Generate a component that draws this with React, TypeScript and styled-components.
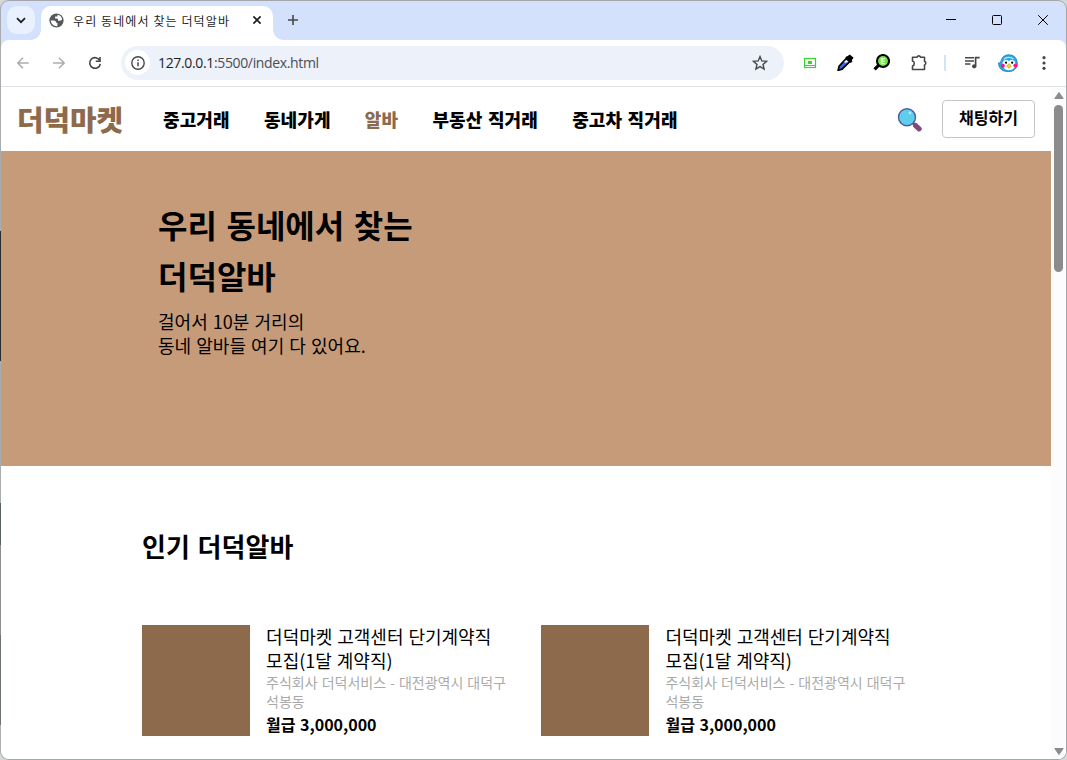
import React from 'react';
import styled, { createGlobalStyle } from 'styled-components';

const KR = `'Noto Sans CJK KR', 'Noto Sans', sans-serif`;

const GlobalStyle = createGlobalStyle`
  * { box-sizing: border-box; }
  body { margin: 0; background: #d5d7d9; font-family: ${KR}; color: #000; }
  h1, h2, h3, p { margin: 0; }
`;

const Desktop = styled.div`
  width: 1067px;
  height: 760px;
  padding: 1px;
  border-radius: 9px;
  overflow: hidden;
  background:
    linear-gradient(#a9abae 231px, #2b2c30 231px 361px, #a9abae 361px 503px, #56635a 503px 545px, #8d8f92 545px 635px, #6c7172 635px 725px, #b0b0b0 725px) 0 0 / 1px 100% no-repeat,
    #a4a6a9;
`;

const Window = styled.div`
  display: flex;
  flex-direction: column;
  width: 1065px;
  height: 758px;
  border-radius: 8px;
  overflow: hidden;
  background: #d3e1fd;
`;

const TabStrip = styled.div`
  display: flex;
  align-items: flex-start;
  height: 39px;
  padding: 5px 0 0 6px;
`;

const TabSearch = styled.div`
  display: grid;
  place-items: center;
  width: 28px;
  height: 28px;
  border-radius: 10px;
  background: #e9f0fe;
`;

const Tab = styled.div`
  position: relative;
  display: flex;
  align-items: center;
  width: 232px;
  height: 34px;
  margin-left: 6px;
  padding: 0 11px 6px 8px;
  border-radius: 10px 10px 0 0;
  background: #fff;
  &::before, &::after {
    content: '';
    position: absolute;
    bottom: 0;
    width: 10px;
    height: 10px;
  }
  &::before { left: -10px; background: radial-gradient(circle at 0 0, transparent 9.5px, #fff 10px); }
  &::after { right: -10px; background: radial-gradient(circle at 100% 0, transparent 9.5px, #fff 10px); }
`;

const TabTitle = styled.span`
  flex: 1;
  margin-left: 9px;
  padding-top: 1px;
  font-size: 12px;
  line-height: 18px;
  letter-spacing: 1.1px;
  white-space: nowrap;
  color: #1f1f1f;
`;

const NewTab = styled.div`
  margin: 8px 0 0 14px;
  line-height: 0;
`;

const WindowControls = styled.div`
  display: flex;
  gap: 35px;
  margin: 9px 17px 0 auto;
`;

const Toolbar = styled.div`
  display: flex;
  align-items: center;
  flex: none;
  height: 47px;
  padding: 0 15px 1px 14px;
  border-bottom: 1px solid #dfe1e4;
  border-radius: 8px 8px 0 0;
  background: #fff;
  svg { flex: none; display: block; }
`;

const NavButtons = styled.div`
  display: flex;
  gap: 20px;
  width: 106px;
`;

const AddressBar = styled.div`
  display: flex;
  align-items: center;
  width: 663px;
  height: 34px;
  padding: 0 16px 0 4px;
  border-radius: 17px;
  background: #ecf1fa;
`;

const SiteInfo = styled.div`
  display: grid;
  place-items: center;
  width: 25px;
  height: 25px;
  border-radius: 50%;
  background: #fff;
`;

const Url = styled.span`
  flex: 1;
  margin-left: 8px;
  font: 14px/20px 'Open Sans', sans-serif;
  letter-spacing: -0.35px;
  color: #4a4e54;
  b { font-weight: 400; color: #1f1f1f; }
`;

const Extensions = styled.div`
  display: flex;
  align-items: center;
  justify-content: space-between;
  width: 125px;
  margin-left: 19px;
`;

const ToolbarDivider = styled.div`
  width: 2px;
  height: 16px;
  margin: 0 18px 0 16px;
  background: #d3e3fd;
`;

const ToolbarEnd = styled.div`
  display: flex;
  align-items: center;
  gap: 17px;
  svg:last-child { margin-left: 6px; }
`;

const Viewport = styled.div`
  display: flex;
  flex: 1;
  min-height: 0;
  background: #fff;
`;

const Page = styled.main`
  flex: 1;
  min-width: 0;
  overflow: hidden;
`;

const Scrollbar = styled.div`
  display: flex;
  flex-direction: column;
  align-items: center;
  justify-content: space-between;
  width: 15px;
  padding: 5px 0 4px;
  background: #fcfcfc;
  svg { display: block; }
`;

const Thumb = styled.div`
  width: 9px;
  height: 167px;
  margin: 6px 0 auto;
  border-radius: 5px;
  background: #8b8b8b;
`;

const Header = styled.header`
  display: flex;
  align-items: center;
  height: 64px;
  padding: 0 16px;
`;

const Logo = styled.div`
  width: 146px;
  font-size: 28.8px;
  line-height: 40px;
  font-weight: 900;
  color: #8e6a4c;
`;

const Menu = styled.nav`
  display: flex;
  gap: 34.2px;
  flex: 1;
`;

const MenuItem = styled.a<{ $active?: boolean }>`
  font-size: 18px;
  line-height: 26px;
  font-weight: 900;
  letter-spacing: 0.12px;
  word-spacing: 1.2px;
  white-space: nowrap;
  color: ${p => (p.$active ? '#8e6a4c' : '#000')};
`;

const SearchIcon = styled.svg`
  margin-top: 2px;
`;

const ChatButton = styled.button`
  width: 93px;
  height: 38px;
  margin-left: 19px;
  padding: 0 0 5px;
  border: 1px solid #c5c5c8;
  border-radius: 4px;
  background: #fff;
  font: 700 16px ${KR};
  color: #000;
`;

const Hero = styled.section`
  height: 315px;
  padding: 48px 157px 0;
  background: #c69b79;
`;

const HeroTitle = styled.h1`
  font-size: 32px;
  line-height: 51px;
  font-weight: 700;
  word-spacing: 2.3px;
`;

const HeroText = styled.p`
  margin-top: 8px;
  font-size: 18px;
  line-height: 24px;
  letter-spacing: 0.03px;
  word-spacing: 1px;
`;

const Popular = styled.section`
  padding: 61px 141px 0;
`;

const SectionTitle = styled.h2`
  font-size: 26px;
  line-height: 38px;
  font-weight: 700;
  letter-spacing: 0.1px;
  word-spacing: 1.4px;
`;

const JobGrid = styled.div`
  display: grid;
  grid-template-columns: 364px 364px;
  gap: 35.4px;
  margin-top: 60px;
`;

const Job = styled.article`
  display: flex;
  gap: 16.1px;
`;

const Thumbnail = styled.div`
  flex: none;
  width: 108px;
  height: 111px;
  background: #8e6a4c;
`;

const JobInfo = styled.div`
  margin-top: -1px;
  white-space: nowrap;
  word-spacing: 0.055em;
`;

const JobTitle = styled.h3`
  font-size: 18px;
  line-height: 24px;
  font-weight: 400;
`;

const JobPlace = styled.p`
  margin-top: 1px;
  font-size: 14px;
  line-height: 19px;
  color: #aaa;
`;

const JobPay = styled.p`
  margin-top: 1px;
  font-size: 16px;
  line-height: 24px;
  font-weight: 700;
`;

const menu = ['중고거래', '동네가게', '알바', '부동산 직거래', '중고차 직거래'];

function Browser() {
  return (
    <>
      <TabStrip>
        <TabSearch>
          <svg width="10" height="7" viewBox="0 0 10 7"><path d="M1 1.2 5 5.2 9 1.2" fill="none" stroke="#1f1f1f" strokeWidth="1.8" /></svg>
        </TabSearch>
        <Tab>
          <svg width="15" height="15" viewBox="0 0 15 15">
            <circle cx="7.5" cy="7.5" r="7.1" fill="#55595e" />
            <path d="M1.8 7.5h2.7c1.8 0 2.6.8 2.6 2.2h1.3v3.6a5.9 5.9 0 0 1-6.6-5.8zM8.5 1.7v1.8H6.1v2.1H8c1.1 0 1.1 1.2 1.1 2.1h2.1l2-1.2a5.8 5.8 0 0 0-4.7-4.8z" fill="#fff" />
          </svg>
          <TabTitle>우리 동네에서 찾는 더덕알바</TabTitle>
          <svg width="10" height="10" viewBox="0 0 10 10"><path d="m1.4 1.4 7.2 7.2m0-7.2L1.4 8.6" stroke="#202124" strokeWidth="1.7" /></svg>
        </Tab>
        <NewTab>
          <svg width="12" height="12" viewBox="0 0 12 12"><path d="M6 1v10M1 6h10" stroke="#474747" strokeWidth="1.6" /></svg>
        </NewTab>
        <WindowControls>
          <svg width="11" height="11" viewBox="0 0 11 11"><path d="M0 4.5h10" stroke="#000" /></svg>
          <svg width="11" height="11" viewBox="0 0 11 11"><rect x=".5" y=".5" width="9" height="9" rx="1" fill="none" stroke="#000" /></svg>
          <svg width="11" height="11" viewBox="0 0 11 11"><path d="m.2.2 9.6 9.6m0-9.6L.2 9.8" stroke="#000" /></svg>
        </WindowControls>
      </TabStrip>
      <Toolbar>
        <NavButtons>
          <svg width="16" height="16" viewBox="0 0 16 16"><path d="M13.8 8H3M8 2.8 2.8 8 8 13.2" fill="none" stroke="#acadae" strokeWidth="1.5" /></svg>
          <svg width="16" height="16" viewBox="0 0 16 16"><path d="M2 8h11M8 2.8 13.2 8 8 13.2" fill="none" stroke="#acadae" strokeWidth="1.5" /></svg>
          <svg width="16" height="16" viewBox="0 0 16 16">
            <path d="M12.7 5.4A5.3 5.3 0 1 0 13.3 8.8" fill="none" stroke="#434343" strokeWidth="1.6" />
            <path d="M13 2v4.2H8.8" fill="none" stroke="#434343" strokeWidth="1.6" />
          </svg>
        </NavButtons>
        <AddressBar>
          <SiteInfo>
            <svg width="14" height="14" viewBox="0 0 14 14">
              <circle cx="7" cy="7" r="6.2" fill="none" stroke="#43474c" strokeWidth="1.4" />
              <path d="M7 6.2v4M7 3.6v1.5" stroke="#43474c" strokeWidth="1.5" />
            </svg>
          </SiteInfo>
          <Url><b>127.0.0.1</b>:5500/index.html</Url>
          <svg width="16" height="16" viewBox="0 0 16 16"><path d="m8 1.6 1.8 4.3 4.8.4-3.6 3.1 1.1 4.7L8 11.6l-4.1 2.5L5 9.4 1.4 6.3l4.8-.4z" fill="none" stroke="#44474a" strokeWidth="1.4" /></svg>
        </AddressBar>
        <Extensions>
          <svg width="14" height="12" viewBox="0 0 14 12">
            <rect x="1.5" y="1.5" width="11" height="9" fill="none" stroke="#35d52a" strokeWidth="1.2" />
            <path d="M2 8.5h10" stroke="#35d52a" /><path d="M5 4h4v3H5z" fill="#35d52a" />
          </svg>
          <svg width="17" height="17" viewBox="0 0 16 16">
            <path d="M9.8 2 12 .4l3.6 3.2-1.7 2.2.6 1.3-1.6 1.3-5-4.9 1.1-1.4z" fill="#000" />
            <path d="m8.7 4.3 3.2 3-7.2 7-3.6 1 .9-3.9z" fill="#4067dd" stroke="#000" strokeWidth="1.6" />
            <path d="m8.8 5.3 2 2-2.6 1.2-1.8-1z" fill="#dbe6ff" />
          </svg>
          <svg width="17" height="17" viewBox="0 0 17 17">
            <path d="m6.3 10.7-4.7 4.6" stroke="#000" strokeWidth="3.2" />
            <circle cx="10" cy="7" r="6" fill="#6ee443" stroke="#000" strokeWidth="2.1" />
            <path d="M7.8 4h4.4v1.3H9.5v1.2h2.2v1.2H9.5v1.3h2.7v1.2H7.8z" fill="#e0ffd3" />
          </svg>
          <svg width="18" height="18" viewBox="0 0 18 18">
            <path d="M2.5 3.2H7a1.9 1.9 0 0 1 3.6 0h3.9v4.1a1.9 1.9 0 0 1 0 3.6v4.6h-12v-3.6a2.5 2.5 0 0 0 0-4.8z" fill="none" stroke="#474747" strokeWidth="1.6" strokeLinejoin="round" />
          </svg>
        </Extensions>
        <ToolbarDivider />
        <ToolbarEnd>
          <svg width="17" height="16" viewBox="0 0 17 16">
            <path d="M1 2.7h9M1 5.9h9M1 9.1h5.5" stroke="#474747" strokeWidth="1.5" />
            <circle cx="10.2" cy="11.3" r="2.1" fill="#474747" /><path d="M11.6 11.5V2.7h4" fill="none" stroke="#474747" strokeWidth="1.7" />
          </svg>
          <svg width="21" height="20" viewBox="0 0 21 20">
            <path d="M2.5 10.2.6 9.8C.3 14.5 3.4 18.6 10 18.6c6.2 0 9.3-3.4 9.3-8.1 0-5.3-3.5-8.7-8.6-8.7-4.7 0-7.6 3.3-8.2 8.4z" fill="#27a9ea" stroke="#1c78b6" strokeWidth=".8" />
            <path d="M6 6.4c1.8-2.3 6.3-3.2 9.3-.4" fill="none" stroke="#c8eeff" strokeWidth="1.2" />
            <path d="M4.5 10.6c.2-3.5 3.5-4.8 6.4-2.5 3-2.2 6.5-.7 6.5 2.7 0 4.1-2.4 6.4-6.5 6.4s-6.6-2.6-6.4-6.6z" fill="#fff" />
            <circle cx="8" cy="9.7" r="1.1" /><circle cx="14.2" cy="9.7" r="1.1" />
            <circle cx="4.8" cy="12.8" r="2.1" fill="#fa1784" /><circle cx="17.4" cy="12.6" r="2" fill="#fa1784" />
            <path d="m11 10.7 2.3 2.2L11 15.4l-2.3-2.5z" fill="#f4da21" stroke="#a58d1b" strokeWidth=".6" />
          </svg>
          <svg width="4" height="16" viewBox="0 0 4 16" fill="#474747"><circle cx="2" cy="2.7" r="1.6" /><circle cx="2" cy="8" r="1.6" /><circle cx="2" cy="13.3" r="1.6" /></svg>
        </ToolbarEnd>
      </Toolbar>
    </>
  );
}

function JobCard() {
  return (
    <Job>
      <Thumbnail />
      <JobInfo>
        <JobTitle>더덕마켓 고객센터 단기계약직<br />모집(1달 계약직)</JobTitle>
        <JobPlace>주식회사 더덕서비스 - 대전광역시 대덕구<br />석봉동</JobPlace>
        <JobPay>월급 3,000,000</JobPay>
      </JobInfo>
    </Job>
  );
}

export default function App() {
  return (
    <>
      <GlobalStyle />
      <Desktop>
        <Window>
          <Browser />
          <Viewport>
            <Page>
              <Header>
                <Logo>더덕마켓</Logo>
                <Menu>{menu.map(m => <MenuItem key={m} $active={m === '알바'}>{m}</MenuItem>)}</Menu>
                <SearchIcon width="26" height="26" viewBox="0 0 26 26">
                  <path d="m16 16 3 3" stroke="#6c4d86" strokeWidth="2.5" />
                  <path d="m18.6 18.6 3.5 3.2" stroke="#85477f" strokeWidth="5.2" strokeLinecap="round" />
                  <circle cx="10" cy="10.2" r="8.5" fill="#5fcdec" stroke="#4c5d9c" strokeWidth="1.4" />
                  <circle cx="13" cy="6" r="1.4" fill="#b4ecf9" />
                </SearchIcon>
                <ChatButton>채팅하기</ChatButton>
              </Header>
              <Hero>
                <HeroTitle>우리 동네에서 찾는<br />더덕알바</HeroTitle>
                <HeroText>걸어서 10분 거리의<br />동네 알바들 여기 다 있어요.</HeroText>
              </Hero>
              <Popular>
                <SectionTitle>인기 더덕알바</SectionTitle>
                <JobGrid><JobCard /><JobCard /></JobGrid>
              </Popular>
            </Page>
            <Scrollbar>
              <svg width="10" height="7" viewBox="0 0 10 7"><path d="M5 .5 9.2 6.5H.8z" fill="#8b8b8b" stroke="#8b8b8b" strokeLinejoin="round" /></svg>
              <Thumb />
              <svg width="10" height="7" viewBox="0 0 10 7"><path d="M.8.5h8.4L5 6.5z" fill="#8b8b8b" stroke="#8b8b8b" strokeLinejoin="round" /></svg>
            </Scrollbar>
          </Viewport>
        </Window>
      </Desktop>
    </>
  );
}
